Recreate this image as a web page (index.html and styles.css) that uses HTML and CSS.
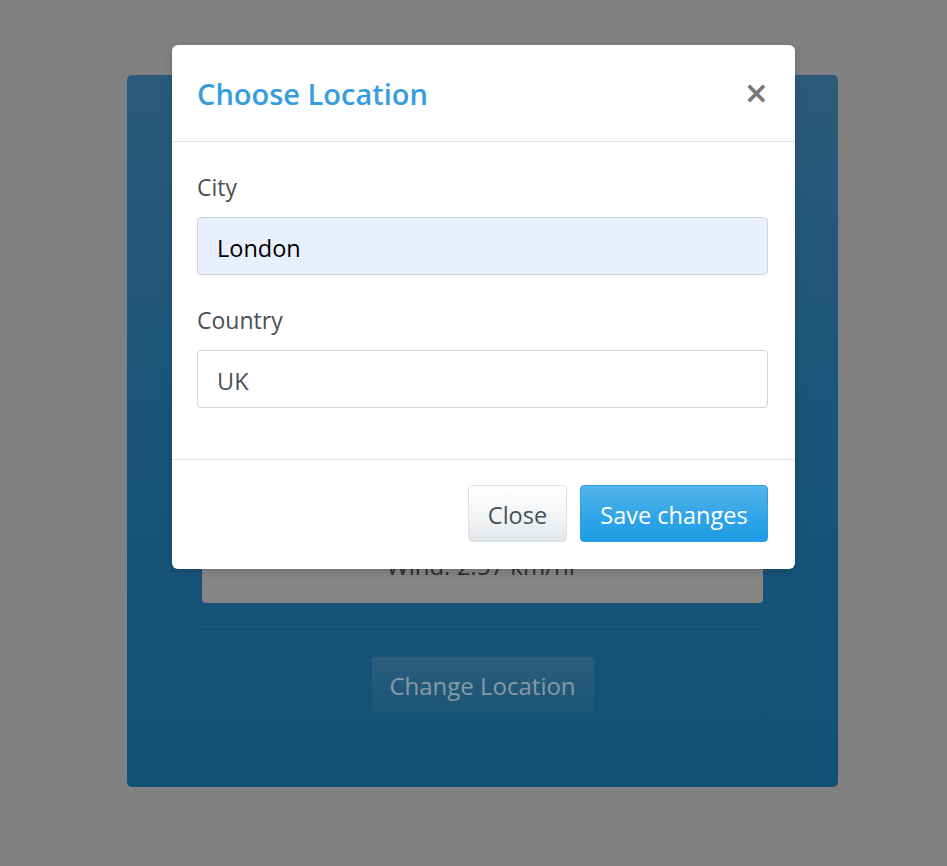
FILE: index.html
```html
<!DOCTYPE html>
<html lang="en">
<head>
<meta charset="utf-8">
<title>Weather</title>
<link rel="stylesheet" href="styles.css">
</head>
<body>
<main class="page">
  <section class="card">
    <div class="card-fill"></div>
    <div class="stat">Wind: 2.57 km/hr</div>
    <hr class="divider">
    <button class="btn-change" type="button">Change Location</button>
  </section>
</main>
<div class="modal">
  <header class="modal-header">
    <h5 class="modal-title">Choose Location</h5>
    <button class="modal-close" type="button" aria-label="Close">&times;</button>
  </header>
  <div class="modal-body">
    <div class="field">
      <label class="field-label" for="city">City</label>
      <input class="field-input autofilled" id="city" type="text" value="London">
    </div>
    <div class="field">
      <label class="field-label" for="country">Country</label>
      <input class="field-input" id="country" type="text" value="UK">
    </div>
  </div>
  <footer class="modal-footer">
    <button class="btn btn-light" type="button">Close</button>
    <button class="btn btn-primary" type="button">Save changes</button>
  </footer>
</div>
</body>
</html>
```

FILE: styles.css
```css
* { box-sizing: border-box; }
html, body { margin: 0; padding: 0; }
body {
  background: #808080;
  font-family: "Open Sans", "Noto Sans", sans-serif;
  width: 947px;
  height: 866px;
  overflow: hidden;
  position: relative;
}
.page {
  display: flex;
  justify-content: center;
  padding-top: 75px;
  padding-left: 18px;
}
.card {
  width: 711px;
  height: 712px;
  border-radius: 5px;
  background: linear-gradient(to bottom, #2b5b7a 0%, #1b5579 45%, #115077 100%);
  display: flex;
  flex-direction: column;
  align-items: center;
  padding: 0 75px 75px;
}
.card-fill { flex: 1; }
.stat {
  width: 561px;
  height: 58px;
  background: #858585;
  border-radius: 4px;
  color: #2e2e2e;
  font-size: 24px;
  text-align: center;
  line-height: 42px;
}
.divider {
  width: 566px;
  border: 0;
  border-top: 1px solid #0f4a6d;
  margin: 26px 0 26px;
}
.btn-change {
  width: 224px;
  height: 56px;
  border: 1px solid #1a5577;
  border-radius: 4px;
  background: linear-gradient(to bottom, #2b5d7b, #1a5577);
  color: #8999a4;
  font-family: inherit;
  font-size: 24px;
  padding: 2px 0 0;
}
.modal {
  position: absolute;
  left: 172px;
  top: 45px;
  width: 623px;
  height: 524px;
  background: #fff;
  border-radius: 6px;
  display: flex;
  flex-direction: column;
  box-shadow: 0 3px 9px rgba(0,0,0,0.15);
}
.modal-header {
  height: 97px;
  border-bottom: 1px solid #e3e3e3;
  display: flex;
  align-items: center;
  justify-content: space-between;
  padding: 3px 26px 0 25px;
}
.modal-title {
  margin: 0;
  color: #379ddc;
  font-size: 29px;
  font-weight: 600;
  line-height: 1.2;
}
.modal-close {
  background: none;
  border: 0;
  padding: 0 0 4px;
  color: #777;
  font-family: "DejaVu Sans", sans-serif;
  font-size: 30px;
  font-weight: bold;
  line-height: 1;
}
.modal-body {
  padding: 25px 27px 25px 25px;
  flex: none;
  height: 318px;
  border-bottom: 1px solid #e3e3e3;
}
.field { margin-bottom: 25px; }
.field-label {
  display: block;
  color: #4a4f55;
  font-size: 23px;
  line-height: 36px;
  padding-top: 2px;
  height: 36px;
  margin-bottom: 14px;
}
.field-input {
  display: block;
  width: 100%;
  height: 58px;
  border: 1px solid #cfd4d9;
  border-radius: 4px;
  background: #fff;
  padding: 3px 19px 0;
  font-family: inherit;
  font-size: 23.5px;
  color: #495057;
}
.field-input.autofilled {
  background: #e8f0fe;
  color: #000;
}
.modal-footer {
  flex: 1;
  display: flex;
  justify-content: flex-end;
  align-items: flex-start;
  gap: 13px;
  padding: 25px 27px 0 25px;
}
.btn {
  height: 57px;
  border-radius: 4px;
  font-family: inherit;
  font-size: 23.5px;
  padding: 3px 0 0;
}
.btn-light {
  width: 99px;
  border: 1px solid #dfe2e5;
  background: linear-gradient(to bottom, #ffffff, #f1f3f5 60%, #e2e5e8);
  color: #495057;
}
.btn-primary {
  width: 188px;
  border: 1px solid #2a9fe3;
  background: linear-gradient(to bottom, #54b4eb, #2fa4e7 60%, #1d9ce5);
  color: #fff;
}
```
